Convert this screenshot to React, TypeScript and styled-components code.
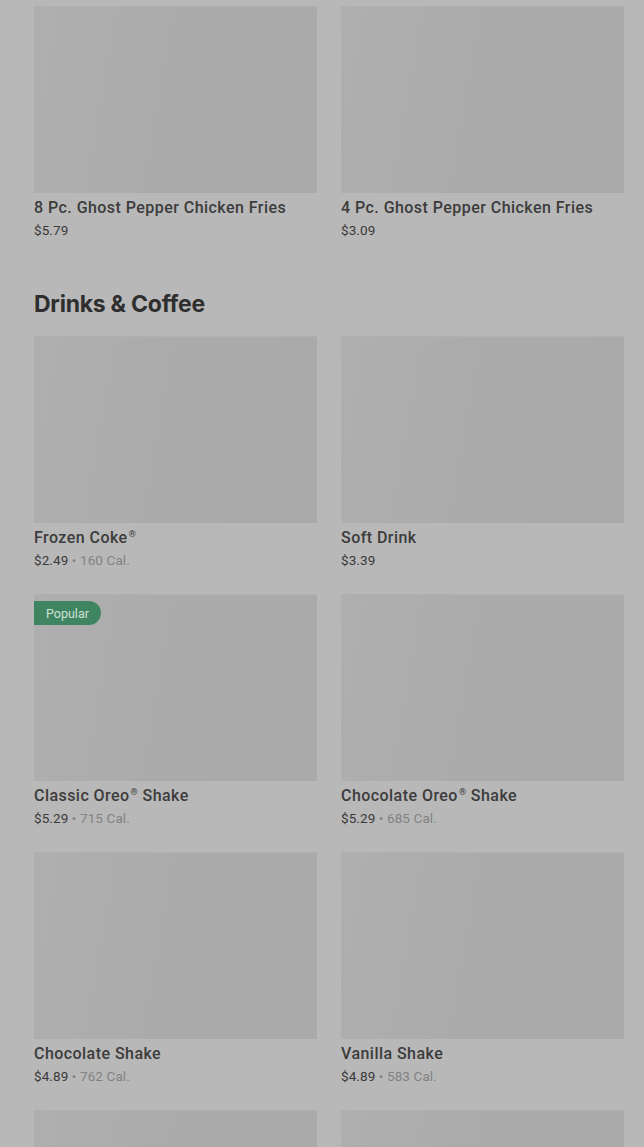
import React from "react";
import styled, { createGlobalStyle } from "styled-components";

const Global = createGlobalStyle`
  html, body { margin: 0; padding: 0; background: #b8b8b8; }
  body { font-family: Roboto, "Liberation Sans", sans-serif; overflow: hidden; }
`;

const Page = styled.div`
  padding: 6px 20px 0 34px;
  height: 1147px;
  overflow: hidden;
  box-sizing: border-box;
`;

const Section = styled.section`
  margin-bottom: 48px;
`;

const Heading = styled.h2`
  margin: 0 0 16px;
  font-family: Inter, "Liberation Sans", sans-serif;
  font-weight: 700;
  font-size: 23px;
  line-height: 32px;
  letter-spacing: -0.25px;
  color: #2e2e2e;
`;

const Grid = styled.div`
  display: grid;
  grid-template-columns: 283px 283px;
  column-gap: 24px;
  row-gap: 24px;
`;

const Card = styled.div`
  display: flex;
  flex-direction: column;
  height: 234px;
`;

const Thumb = styled.div`
  position: relative;
  height: 187px;
  background: linear-gradient(100deg, #afafaf 0%, #ababab 45%, #aaaaaa 100%);
  box-shadow: inset 0 1px 0 #b0b0b0;
`;

const Badge = styled.span`
  position: absolute;
  top: 7px;
  left: 0;
  height: 24px;
  padding: 0 12px;
  display: flex;
  align-items: center;
  background: #3f8562;
  color: #cfe2d6;
  font-family: Roboto, "Liberation Sans", sans-serif;
  font-size: 12.5px;
  border-radius: 0 12px 12px 0;
`;

const Title = styled.div`
  margin-top: 5px;
  font-size: 16px;
  font-weight: 500;
  line-height: 20px;
  letter-spacing: 0.45px;
  color: #3c3c3c;
`;

const Reg = styled.sup`
  font-size: 9px;
  line-height: 0;
  vertical-align: 6px;
  margin-left: 1px;
`;

const Meta = styled.div`
  margin-top: 3px;
  font-size: 13.5px;
  line-height: 18px;
  color: #3a3a3a;
  letter-spacing: 0.1px;
`;

const Cal = styled.span`
  color: #828282;
`;

type Item = { title: string; price: string; cal?: string; popular?: boolean };

const fries: Item[] = [
  { title: "8 Pc. Ghost Pepper Chicken Fries", price: "$5.79" },
  { title: "4 Pc. Ghost Pepper Chicken Fries", price: "$3.09" },
];

const drinks: Item[] = [
  { title: "Frozen Coke®", price: "$2.49", cal: "160 Cal." },
  { title: "Soft Drink", price: "$3.39" },
  { title: "Classic Oreo® Shake", price: "$5.29", cal: "715 Cal.", popular: true },
  { title: "Chocolate Oreo® Shake", price: "$5.29", cal: "685 Cal." },
  { title: "Chocolate Shake", price: "$4.89", cal: "762 Cal." },
  { title: "Vanilla Shake", price: "$4.89", cal: "583 Cal." },
  { title: "", price: "" },
  { title: "", price: "" },
];

function renderTitle(t: string) {
  const parts = t.split("®");
  return parts.map((p, i) => (
    <React.Fragment key={i}>
      {p}
      {i < parts.length - 1 && <Reg>®</Reg>}
    </React.Fragment>
  ));
}

function ItemCard({ item }: { item: Item }) {
  return (
    <Card>
      <Thumb>{item.popular && <Badge>Popular</Badge>}</Thumb>
      {item.title && <Title>{renderTitle(item.title)}</Title>}
      {item.price && (
        <Meta>
          {item.price}
          {item.cal && <Cal> • {item.cal}</Cal>}
        </Meta>
      )}
    </Card>
  );
}

export default function App() {
  return (
    <>
      <Global />
      <Page>
        <Section>
          <Grid>
            {fries.map((it, i) => (
              <ItemCard key={i} item={it} />
            ))}
          </Grid>
        </Section>
        <Section>
          <Heading>Drinks &amp; Coffee</Heading>
          <Grid>
            {drinks.map((it, i) => (
              <ItemCard key={i} item={it} />
            ))}
          </Grid>
        </Section>
      </Page>
    </>
  );
}
